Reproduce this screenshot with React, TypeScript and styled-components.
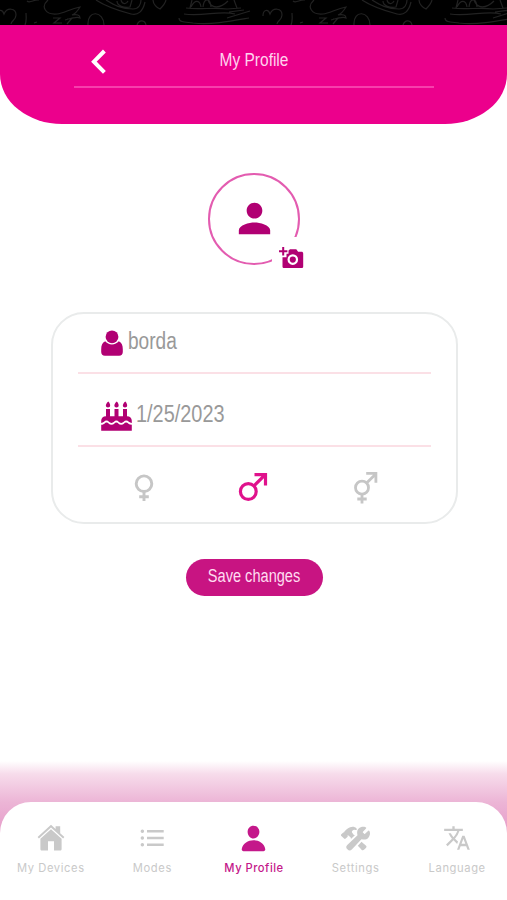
import React from 'react';
import styled, { createGlobalStyle } from 'styled-components';
import { MdPerson, MdTranslate } from 'react-icons/md';
import { IoPerson, IoConstruct } from 'react-icons/io5';

const GlobalStyle = createGlobalStyle`
  * { box-sizing: border-box; }
  body { margin: 0; background: #fff; font-family: "Liberation Sans", Arial, sans-serif; }
  button { border: 0; padding: 0; background: none; font: inherit; color: inherit; }
  svg { display: block; }
`;

const Screen = styled.div`
  width: 507px;
  height: 900px;
  display: flex;
  flex-direction: column;
  background: #fff;
  overflow: hidden;
`;

const StatusBand = styled.div`
  height: 25px;
  flex: none;
  background: #000;
`;

const Header = styled.header`
  height: 99px;
  flex: none;
  background: #ec008c;
  border-radius: 0 0 62px 62px / 0 0 50px 50px;
  padding: 0 73px 0 74px;
`;

const TitleBar = styled.div`
  height: 63px;
  display: grid;
  grid-template-columns: 48px 1fr 48px;
  border-bottom: 2px solid #f63fac;
`;

const BackButton = styled.button`
  padding: 24px 0 0 16px;
  align-self: start;
`;

const Condensed = styled.span<{ $size: number; $ratio: number; $origin?: string }>`
  display: inline-block;
  font-size: ${(p) => p.$size}px;
  line-height: 1.2;
  white-space: nowrap;
  transform: scaleX(${(p) => p.$ratio});
  transform-origin: ${(p) => p.$origin ?? 'center'} center;
`;

const Title = styled.h1`
  margin: 0;
  padding-top: 25px;
  font-weight: 400;
  text-align: center;
  line-height: 0;
  color: #ffd3ee;
`;

const Main = styled.main`
  height: 637px;
  flex: none;
  display: flex;
  flex-direction: column;
  align-items: center;
  padding-top: 49px;
`;

const Avatar = styled.div`
  position: relative;
  width: 92px;
  height: 92px;
  flex: none;
  display: grid;
  place-items: center;
  padding: 0 0 1px 1px;
  border: 2px solid #e35cb0;
  border-radius: 50%;
  color: #b10073;
`;

const PhotoBadge = styled.button`
  position: absolute;
  left: 62px;
  top: 62px;
  width: 36px;
  height: 36px;
  padding: 7px 0 0 7px;
  background: #fff;
  border-radius: 8px 0 0 0;
`;

const Card = styled.section`
  width: 407px;
  height: 212px;
  margin: 47px 0 0 1px;
  padding: 0 25px;
  border: 2px solid #e9ebeb;
  border-radius: 33px;
  flex: none;
`;

const Field = styled.div<{ $height: number; $gap: number; $bottom: number }>`
  height: ${(p) => p.$height}px;
  display: flex;
  align-items: flex-end;
  gap: ${(p) => p.$gap}px;
  padding: 0 0 ${(p) => p.$bottom}px 23px;
  border-bottom: 2px solid #fbe0e6;
  color: #999;
`;

const FieldText = styled.span<{ $lift: number }>`
  display: flex;
  padding-bottom: ${(p) => p.$lift}px;
`;

const Genders = styled.div`
  display: flex;
  justify-content: space-between;
  align-items: flex-start;
  padding: 25px 53px 0 56px;
`;

const SaveButton = styled.button`
  width: 137px;
  height: 37px;
  margin: 35px 0 0 1px;
  padding-bottom: 1px;
  display: flex;
  align-items: center;
  justify-content: center;
  border-radius: 19px;
  background: #c81482;
  color: #ffdcf1;
`;

const Footer = styled.footer`
  height: 139px;
  flex: none;
  padding-top: 41px;
  background: linear-gradient(#fff 0, #f7dceb 13px, #ecb5d6 41px, #e59ac8 75px);
`;

const Nav = styled.nav`
  height: 98px;
  display: grid;
  grid-template-columns: repeat(5, 101.6px);
  background: #fff;
  border-radius: 31px 31px 0 0;
`;

const NavItem = styled.button<{ $active?: boolean }>`
  display: flex;
  flex-direction: column;
  align-items: center;
  padding-top: 21px;
  gap: 7px;
  font: ${(p) => (p.$active ? 500 : 400)} 11.2px/16px Inter, sans-serif;
  letter-spacing: ${(p) => (p.$active ? 0.5 : 0.6)}px;
  color: ${(p) => (p.$active ? '#c4188a' : '#c9c9c9')};
  white-space: nowrap;
`;

const IconSlot = styled.span`
  height: 30px;
  display: grid;
  place-items: center;
`;

const Doodles = () => (
  <svg width="507" height="25" viewBox="0 0 507 25" fill="none" stroke="#222" strokeWidth="1.2">
    <defs>
      <g id="doodle">
        <path d="M-3 16c0-6 5-8 7-2 3-7 12-6 12 1 0 5-5 6-5 9M27 1c3 3 7-2 12-1M25 25c2-5 1-8 1-12M48 0c-8 7-2 15 9 14 7-1 13-5 23-7-3 5-5 7-8 8 5-1 8 0 8 3-4-2-7 1-13 1M53 18h7l-6 5h8M65 20l7-2-5 6M34 23l3-1M88 25c-1-16 16-14 16 0M137 25c2-6 8-5 9 0" />
        <path d="M96 0c9 6 20 10 35 14 7 2 12-3 14-12M106 0c8 5 15 9 27 9 6 0 8-5 8-9M117 1c0 5 7 7 13 6l2-7M121 0c1 4 5 5 7 1M153 0c0 4 4 8 7 9 2-2 5-5 6-9" />
        <path d="M190 8l2-8M186 8c13 2 28-1 41 1l14-1M184 14c18 3 37-4 51 0M179 18c0 5 8 4 14 5 19 2 39-2 56-5M191 7c4-8 9-7 10 0m2 0c1-9 7-10 8 0M208 0c3 9 12 9 20 1M234 0l3 8M227 18l23-7M229 12l15-2" />
      </g>
    </defs>
    <use href="#doodle" />
    <use href="#doodle" x="266" />
  </svg>
);

const BackIcon = () => (
  <svg width="18" height="26" viewBox="0 0 18 26" fill="none" stroke="#fff" strokeWidth="4">
    <path d="M14.4 2 3.9 12.7 14.4 23.4" />
  </svg>
);

const AddPhotoIcon = () => (
  <svg width="25" height="24" viewBox="0 0 25 24">
    <path fill="#b10073" d="M9.5 3.5 11 2.3h6.3l1.8 2.4h3.4c1 0 1.7.7 1.7 1.7v13c0 1-.7 1.7-1.7 1.7H5.2c-1 0-1.7-.7-1.7-1.7V10.2h4V6.8h2z" />
    <path stroke="#b10073" strokeWidth="2" d="M4.2 0v8.4M0 4.2h8.4" />
    <circle cx="13.8" cy="12.6" r="4.2" fill="none" stroke="#fff" strokeWidth="2.2" />
  </svg>
);

const UserIcon = () => (
  <svg width="22" height="27" viewBox="0 0 22 27" fill="#b10073">
    <circle cx="11" cy="6.8" r="6.4" />
    <path d="M4.2 11.3c1.6 2 4 3.1 6.8 3.1s5.2-1.1 6.8-3.1c2.9 1.2 4 4.2 4 7.9v2.9c0 2.3-1.4 3.7-3.7 3.7H3.9c-2.3 0-3.7-1.4-3.7-3.7v-2.9c0-3.7 1.1-6.7 4-7.9z" />
  </svg>
);

const CakeIcon = () => (
  <svg width="31" height="30" viewBox="0 0 31 30" fill="#b10073">
    <path d="M5 8h4v7.2h4.5V8h4v7.2H22V8h4v7.2c3 0 4.8 1.8 4.8 4.6v2.1c-2.6 0-3.4-2.4-5.6-2.4-2.1 0-2.7 2.4-5 2.4s-2.8-2.4-4.8-2.4-2.7 2.4-4.9 2.4c-2.3 0-2.8-2.4-5-2.4-2 0-2.8 2.4-5.3 2.4v-2.1c0-2.8 1.8-4.6 4.8-4.6z" />
    <path d="M.2 23.7c3 0 3.7-2.3 5.4-2.3 1.8 0 2.5 2.3 4.9 2.3 2.5 0 3-2.3 4.9-2.3 1.8 0 2.4 2.3 4.8 2.3 2.5 0 3.1-2.3 4.9-2.3s2.7 2.3 5.7 2.3v6H.2z" />
    <path d="M7.3.6c2.8 3 2.3 6-.3 6S3.8 3.5 7.3.6zM15.8.6c2.8 3 2.3 6-.3 6s-3.2-3.1.3-6zM24.3.6c2.8 3 2.3 6-.3 6s-3.2-3.1.3-6z" />
  </svg>
);

const FemaleIcon = () => (
  <svg width="20" height="30" viewBox="0 0 20 30" fill="none" stroke="#c6c6c6" strokeWidth="2.9">
    <circle cx="10" cy="11.7" r="7.8" />
    <path d="M10 19.500v9.500M5.2 24.8h9.600" />
  </svg>
);

const MaleIcon = () => (
  <svg width="30" height="30" viewBox="0 0 30 30" fill="none" stroke="#e0128c" strokeWidth="3.2">
    <circle cx="10.3" cy="19.5" r="7.9" />
    <path d="M16 13.8 27 2.8M16.5 2.6h11v10.8" />
  </svg>
);

const BothIcon = () => (
  <svg width="25" height="33" viewBox="0 0 25 33" fill="none" stroke="#c6c6c6" strokeWidth="2.8">
    <circle cx="9" cy="15.7" r="6.500" />
    <path d="M9 22.2v9.300M4.3 27h9.4M13.6 11.1 22.5 2.2M13.2 1.400h9.700v9.400" />
  </svg>
);

const HomeIcon = () => (
  <svg width="28" height="28" viewBox="0 0 28 28" fill="currentColor">
    <path d="M14 5.2 3.4 14.8V25c0 1 .6 1.600 1.600 1.600h6V17.2h6v9.400h6c1 0 1.600-.6 1.600-1.600V14.8z" />
    <path d="M14 .8.6 13l1.300 1.400L14 3.500l12.100 10.900 1.300-1.400-4.200-3.800V2.200h-4.600v2.800z" />
  </svg>
);

const ListIcon = () => (
  <svg width="24" height="18" viewBox="0 0 24 18" stroke="currentColor" strokeWidth="2.5">
    <path d="M7 2.3h16.700M7 9h16.700M7 15.700h16.700" />
    <path strokeWidth="3.4" strokeLinecap="round" d="M2.300 2.300h.1M2.300 9h.1M2.300 15.700h.1" />
  </svg>
);

const tabs = [
  { label: 'My Devices', icon: <HomeIcon /> },
  { label: 'Modes', icon: <ListIcon /> },
  { label: 'My Profile', icon: <IoPerson size={29} />, active: true },
  { label: 'Settings', icon: <IoConstruct size={29} /> },
  { label: 'Language', icon: <MdTranslate size={28} /> },
];

export default function App() {
  return (
    <Screen>
      <GlobalStyle />
      <StatusBand><Doodles /></StatusBand>
      <Header>
        <TitleBar>
          <BackButton aria-label="Back"><BackIcon /></BackButton>
          <Title><Condensed $size={18} $ratio={0.86}>My Profile</Condensed></Title>
        </TitleBar>
      </Header>
      <Main>
        <Avatar>
          <MdPerson size={47} />
          <PhotoBadge aria-label="Add photo"><AddPhotoIcon /></PhotoBadge>
        </Avatar>
        <Card>
          <Field $height={60} $gap={5} $bottom={15}>
            <UserIcon />
            <FieldText $lift={1}><Condensed $size={23} $ratio={0.83} $origin="left">borda</Condensed></FieldText>
          </Field>
          <Field $height={73} $gap={4} $bottom={14}>
            <CakeIcon />
            <FieldText $lift={2}><Condensed $size={23} $ratio={0.865} $origin="left">1/25/2023</Condensed></FieldText>
          </Field>
          <Genders>
            <FemaleIcon />
            <MaleIcon />
            <BothIcon />
          </Genders>
        </Card>
        <SaveButton><Condensed $size={18} $ratio={0.81}>Save changes</Condensed></SaveButton>
      </Main>
      <Footer>
        <Nav>
          {tabs.map((tab) => (
            <NavItem key={tab.label} $active={tab.active}>
              <IconSlot>{tab.icon}</IconSlot>
              {tab.label}
            </NavItem>
          ))}
        </Nav>
      </Footer>
    </Screen>
  );
}
